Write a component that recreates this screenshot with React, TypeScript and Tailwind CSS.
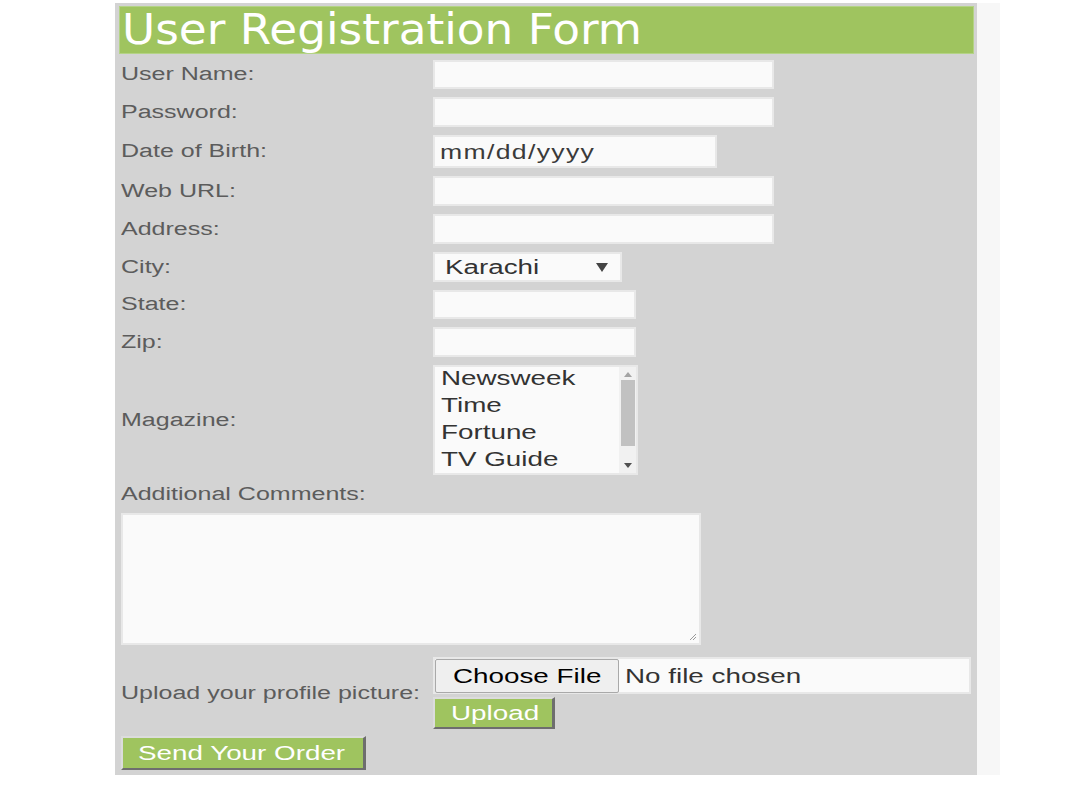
/**
 * User Registration Form — flat grey form panel with green title bar.
 */

const STRETCH = "inline-block origin-left scale-x-[1.39] whitespace-nowrap";
const LABEL = "w-[312px] shrink-0 text-[18px] text-[#5c5c5c]";
const FIELD = "border-2 border-[#e8e8e8] bg-[#fafafa]";

function Label({ children }: { children: React.ReactNode }) {
  return (
    <div className={LABEL}>
      <span className={STRETCH}>{children}</span>
    </div>
  );
}

function TextRow({ label, h, w }: { label: string; h: number; w: "long" | "short" }) {
  return (
    <div className="flex items-center" style={{ height: h }}>
      <Label>{label}</Label>
      <input
        type="text"
        className={`${FIELD} h-full outline-none ${w === "long" ? "w-[341px]" : "w-[203px]"}`}
      />
    </div>
  );
}

function Row({ label, h, children }: { label: string; h: number; children: React.ReactNode }) {
  return (
    <div className="flex items-center" style={{ height: h }}>
      <Label>{label}</Label>
      {children}
    </div>
  );
}

export default function App() {
  const magazines = ["Newsweek", "Time", "Fortune", "TV Guide"];

  return (
    <div
      className="w-[1080px] h-[790px] bg-white overflow-hidden"
      style={{ fontFamily: '"Liberation Sans", Arial, sans-serif' }}
    >
      <div className="flex pt-[3px] pl-[115px]">
        {/* Form panel */}
        <div className="w-[862px] h-[772px] bg-[#d3d3d3] pt-[3px] pl-[4px]">
          {/* Title bar */}
          <div className="w-[855px] h-[48px] bg-[#9fc45f] border border-[#b4d386] pl-[2px] flex items-center">
            <h1
              className="text-white text-[42px] leading-[48px] inline-block origin-left scale-x-[1.08] whitespace-nowrap"
              style={{ fontFamily: '"DejaVu Sans", Verdana, sans-serif' }}
            >
              User Registration Form
            </h1>
          </div>

          <div className="pl-[2px]">
            <div className="mt-[6px] flex flex-col gap-[8px]">
              <TextRow label="User Name:" h={29} w="long" />
              <TextRow label="Password:" h={30} w="long" />
              <Row label="Date of Birth:" h={33}>
                <div className={`${FIELD} w-[284px] h-full flex items-center pl-[5px] text-[20px] text-[#3a3a3a]`}>
                  <span className="inline-block origin-left scale-x-[1.33] tracking-[1px] whitespace-nowrap">mm/dd/yyyy</span>
                </div>
              </Row>
              <TextRow label="Web URL:" h={30} w="long" />
              <TextRow label="Address:" h={30} w="long" />
              <Row label="City:" h={30}>
                <div className={`${FIELD} w-[189px] h-full flex items-center justify-between pl-[10px] pr-[12px] text-[20px] text-[#333]`}>
                  <span className={STRETCH}>Karachi</span>
                  <svg width="12" height="9" viewBox="0 0 12 9">
                    <path d="M0 0h12L6 9z" fill="#444" />
                  </svg>
                </div>
              </Row>
              <TextRow label="State:" h={29} w="short" />
              <TextRow label="Zip:" h={30} w="short" />
              <Row label="Magazine:" h={110}>
                <div className={`${FIELD} w-[205px] h-full flex`}>
                  <div className="flex-1 pl-[6px] -mt-[2px] text-[20px] leading-[27px] text-[#333]">
                    {magazines.map((m) => (
                      <div key={m}>
                        <span className={STRETCH}>{m}</span>
                      </div>
                    ))}
                  </div>
                  {/* listbox scrollbar */}
                  <div className="w-[17px] h-full bg-[#f1f1f1] flex flex-col items-center">
                    <svg className="mt-[5px]" width="8" height="5" viewBox="0 0 8 5">
                      <path d="M0 5h8L4 0z" fill="#a3a3a3" />
                    </svg>
                    <div className="mt-[3px] w-[14px] h-[66px] bg-[#c1c1c1]" />
                    <div className="flex-1" />
                    <svg className="mb-[5px]" width="8" height="5" viewBox="0 0 8 5">
                      <path d="M0 0h8L4 5z" fill="#505050" />
                    </svg>
                  </div>
                </div>
              </Row>
            </div>

            {/* Comments */}
            <div className="mt-[4px] h-[30px] flex items-center text-[18px] text-[#5c5c5c]">
              <span className={STRETCH}>Additional Comments:</span>
            </div>
            <div className={`${FIELD} mt-[4px] w-[580px] h-[132px] flex items-end justify-end p-[2px]`}>
              <svg width="8" height="8" viewBox="0 0 8 8">
                <path d="M7 1L1 7M7 4L4 7" stroke="#9a9a9a" strokeWidth="1" />
              </svg>
            </div>

            {/* Upload */}
            <div className="mt-[12px] flex items-center">
              <Label>Upload your profile picture:</Label>
              <div className="flex flex-col">
                <div className={`${FIELD} w-[538px] h-[37px] flex items-center`}>
                  <div className="w-[184px] h-[34px] bg-[#efefef] border border-[#a9a9a9] rounded-[2px] flex items-center pl-[17px] text-[20px] text-black">
                    <span className={STRETCH}>Choose File</span>
                  </div>
                  <div className="pl-[6px] text-[20px] text-[#333]">
                    <span className={STRETCH}>No file chosen</span>
                  </div>
                </div>
                <button className="mt-[3px] w-[122px] h-[32px] bg-[#9fc45f] border-2 border-t-[#dcdcdc] border-l-[#dcdcdc] border-r-[#6e6e6e] border-b-[#6e6e6e] border-r-[3px] flex items-center pl-[16px] text-[20px] text-white">
                  <span className={STRETCH}>Upload</span>
                </button>
              </div>
            </div>

            <button className="mt-[7px] w-[245px] h-[34px] bg-[#9fc45f] border-2 border-t-[#dcdcdc] border-l-[#dcdcdc] border-r-[#6e6e6e] border-b-[#6e6e6e] border-r-[3px] flex items-center pl-[15px] text-[20px] text-white">
              <span className={STRETCH}>Send Your Order</span>
            </button>
          </div>
        </div>

        {/* Page scrollbar track */}
        <div className="w-[23px] h-[772px] bg-[#f7f7f7]" />
      </div>
    </div>
  );
}
